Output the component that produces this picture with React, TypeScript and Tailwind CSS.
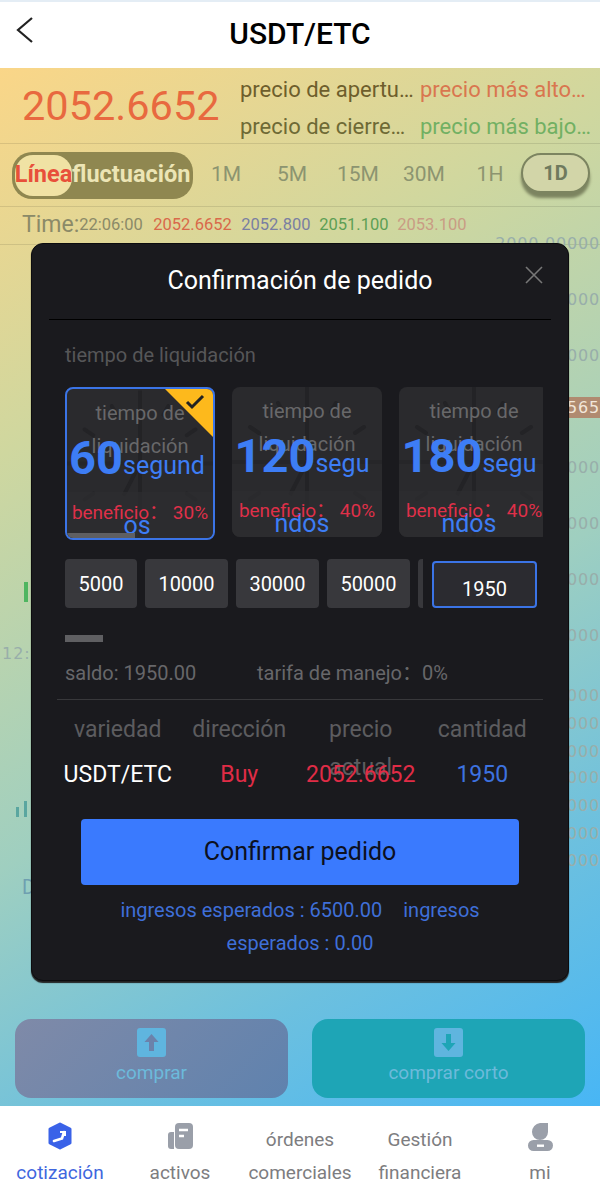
import React from "react";

const font = { fontFamily: "Roboto, 'Noto Sans CJK SC', sans-serif" };

const axis: number[] = [0, 56, 112, 224, 280, 336, 392, 452, 480, 508, 534, 562, 590, 617];

function Clock() {
  return (
    <svg className="absolute inset-0 w-full h-full" viewBox="0 0 150 150" fill="none" stroke="#232326" strokeWidth="4">
      <path d="M75 0V150" />
      <path d="M0 75H150" strokeWidth="4" stroke="#262629" />
      <path d="M18 40l9 6M132 40l-9 6M46 16l5 9M104 16l-5 9M18 112l9-6M132 112l-9-6" strokeLinecap="round" />
      <path d="M75 75L58 108" />
    </svg>
  );
}

function Card({ n, pct, active }: { n: string; pct: string; active?: boolean }) {
  return (
    <div
      className={
        "relative shrink-0 w-[150px] overflow-hidden rounded-lg bg-[#2a2a2d] " +
        (active ? "h-[153px] border-2 border-[#3b74e6]" : "h-[150px]")
      }
    >
      <Clock />
      <div className="absolute left-0 right-0 bottom-0 h-[46px] bg-[#2e2e31] opacity-70" />
      <div className="absolute top-[8px] left-0 right-0 text-center text-[20px] leading-[33px] text-[#68686a]">
        tiempo de
        <br />
        liquidación
      </div>
      <div className="absolute top-[39px] left-0 w-[140px] text-center break-all text-[#3d7df5] text-[25px] leading-[60px]">
        <span className="text-[47px] font-bold">{n}</span>segundos
      </div>
      <div className="absolute top-[109px] left-0 right-0 text-center whitespace-nowrap text-[19px] leading-[30px] text-[#df3049]">
        beneficio：{pct}
      </div>
      {active && (
        <>
          <div className="absolute top-0 right-0 w-[48px] h-[48px] bg-[#fdb91c] [clip-path:polygon(0_0,100%_0,100%_100%)]" />
          <svg className="absolute top-[5px] right-[8px]" width="20" height="16" viewBox="0 0 20 16" fill="none" stroke="#222" strokeWidth="3">
            <path d="M2 8l5 5L18 2" />
          </svg>
          <div className="absolute -left-[2px] -bottom-[2px] w-[70px] h-[7px] bg-[#5f5f62]" />
        </>
      )}
    </div>
  );
}

function Amount({ v, w }: { v: string; w: string }) {
  return (
    <div className={"flex items-center justify-center h-[49px] rounded bg-[#38383c] text-white text-[20px] shrink-0 " + w}>{v}</div>
  );
}

function NavLabel({ children, active }: { children: React.ReactNode; active?: boolean }) {
  return <div className={"text-[19px] leading-[33px] text-center whitespace-nowrap " + (active ? "text-[#3f67de]" : "text-[#7d7d80]")}>{children}</div>;
}

export default function App() {
  return (
    <div className="relative w-[600px] h-[1188px] overflow-hidden flex flex-col bg-white" style={font}>
      <div className="h-[2px] bg-[#e4edf5]" />
      <header className="relative h-[66px] flex items-center justify-center shrink-0">
        <svg className="absolute left-[15px] top-[14px]" width="20" height="28" viewBox="0 0 20 28" fill="none" stroke="#222" strokeWidth="2.2">
          <path d="M17 2L3 14l14 12" />
        </svg>
        <h1 className="text-[30px] font-medium text-black -mt-[3px]">USDT/ETC</h1>
      </header>

      <main className="relative flex-1 flex flex-col bg-[linear-gradient(150deg,#fad688_0%,#cfd79f_28%,#9fcfc0_58%,#6cc0df_80%,#48b6f5_100%)]">
        <section className="h-[76px] flex items-center border-b border-black/10 pl-[22px] shrink-0">
          <div className="text-[41.5px] text-[#e8693f] w-[218px] leading-none">2052.6652</div>
          <div className="grid grid-cols-[180px_172px] text-[22px] leading-[37px] pt-[5px]">
            <div className="truncate text-[#6e5e2c] w-[178px]">precio de apertura: 2052.6652</div>
            <div className="truncate text-[#d9764f] w-[170px]">precio más alto: 2053.100</div>
            <div className="truncate text-[#6e6a35] w-[170px]">precio de cierre: 2052.800</div>
            <div className="truncate text-[#72b063] w-[172px]">precio más bajo: 2051.100</div>
          </div>
        </section>

        <section className="h-[63px] flex items-center border-b border-black/10 shrink-0 pl-[12px]">
          <div className="w-[181px] h-[47px] rounded-[20px] bg-[#8f8750] flex items-center pl-[3px] text-[23.5px] font-bold shrink-0 whitespace-nowrap">
            <div className="w-[57px] h-[41px] rounded-[18px] bg-[#f0e2a4] flex items-center justify-center text-[#e8503a]">Línea</div>
            <span className="text-[#ece5b5]">fluctuación</span>
          </div>
          <div className="flex text-[21px] text-[#8c9470]">
            <div className="w-[66px] text-center">1M</div>
            <div className="w-[66px] text-center">5M</div>
            <div className="w-[66px] text-center">15M</div>
            <div className="w-[66px] text-center">30M</div>
            <div className="w-[66px] text-center">1H</div>
          </div>
          <div className="ml-[-2px] -mt-[4px] w-[69px] h-[40px] rounded-[20px] bg-[#d2d5a8] border-2 border-[#7c8460] shadow-[0_5px_3px_#7c8460] flex items-center justify-center text-[20px] font-bold text-[#6f7a5e]">
            1D
          </div>
        </section>

        <section className="h-[38px] flex items-center border-b border-black/10 shrink-0 pl-[22px] text-[16.5px] whitespace-nowrap">
          <span className="text-[23px] text-[#8b8a68]">Time:</span>
          <span className="text-[#8b8a68] w-[74px]">22:06:00</span>
          <span className="text-[#d9694a] w-[88px]">2052.6652</span>
          <span className="text-[#7a7fa2] w-[78px]">2052.800</span>
          <span className="text-[#5d9f55] w-[78px]">2051.100</span>
          <span className="text-[#c99c84]">2053.100</span>
        </section>

        <section className="relative flex-1 text-[#98aeaa]">
          {axis.map((y) => (
            <div key={y} className="absolute right-0 leading-none tracking-[0.8px] [font-family:'DejaVu_Sans',sans-serif] text-[16px]" style={{ top: y - 9 }}>
              2000.00000
            </div>
          ))}
          <div className="absolute right-0 top-[152px] h-[21px] w-[110px] bg-[#b08a70] text-right text-[#f2e6da] text-[16px] leading-[21px] tracking-[0.8px] [font-family:'DejaVu_Sans',sans-serif]">2052.66565</div>
          <div className="absolute left-[2px] top-[397px] text-[16px] tracking-[1px] [font-family:'DejaVu_Sans',sans-serif]">12:00</div>
          <div className="absolute left-[24px] top-[337px] w-[4px] h-[20px] bg-[#4fb560]" />
          <div className="absolute left-[16px] top-[562px] w-[3px] h-[10px] bg-[#5aa6a0]" />
          <div className="absolute left-[24px] top-[556px] w-[3px] h-[16px] bg-[#5aa6a0]" />
          <div className="absolute left-[22px] top-[627px] text-[20px] text-[#6f9fb0]">D</div>
        </section>

        <section className="h-[79px] mb-[8px] flex gap-[24px] px-[15px] shrink-0 text-[19px] text-[#6cbadb]">
          <div className="flex-1 rounded-2xl bg-[linear-gradient(135deg,#7f8aa8,#5f82ae)] flex flex-col items-center pt-[9px]">
            <svg width="29" height="29" viewBox="0 0 29 29">
              <rect width="29" height="29" rx="3" fill="#5fb5df" />
              <path d="M14.5 6l7 8h-4.5v9h-5v-9H7.5z" fill="#6b82ab" />
            </svg>
            <div className="mt-[3px] leading-[26px]">comprar</div>
          </div>
          <div className="flex-1 rounded-2xl bg-[#1ea5b6] flex flex-col items-center pt-[9px]">
            <svg width="29" height="29" viewBox="0 0 29 29">
              <rect width="29" height="29" rx="3" fill="#5fb5df" />
              <path d="M14.5 23l7-8h-4.5V6h-5v9H7.5z" fill="#1ea5b6" />
            </svg>
            <div className="mt-[3px] leading-[26px]">comprar corto</div>
          </div>
        </section>
      </main>

      <nav className="h-[82px] shrink-0 grid grid-cols-5 bg-white pt-[16px]">
        <div className="flex flex-col items-center">
          <svg width="28" height="28" viewBox="0 0 28 28">
            <path d="M14 2l10 5v14l-10 5-10-5V7z" fill="#3a62e8" stroke="#3a62e8" strokeWidth="3" strokeLinejoin="round" />
            <path d="M8 19l8-2.5 2-6.5" fill="none" stroke="#fff" strokeWidth="2.6" strokeLinecap="round" />
            <path d="M14 10h5v4" fill="none" stroke="#fff" strokeWidth="2" />
          </svg>
          <div className="mt-[6px]"><NavLabel active>cotización</NavLabel></div>
        </div>
        <div className="flex flex-col items-center">
          <svg width="28" height="28" viewBox="0 0 28 28">
            <path d="M5 10h3v17H5a3 3 0 0 1-3-3V13a3 3 0 0 1 3-3z" fill="#9a9fa9" />
            <rect x="9" y="1" width="18" height="26" rx="4" fill="#9a9fa9" />
            <path d="M13 8h9M13 14h5" stroke="#fff" strokeWidth="2.4" />
          </svg>
          <div className="mt-[6px]"><NavLabel>activos</NavLabel></div>
        </div>
        <div className="mt-[1px]">
          <NavLabel>órdenes<br />comerciales</NavLabel>
        </div>
        <div className="mt-[1px]">
          <NavLabel>Gestión<br />financiera</NavLabel>
        </div>
        <div className="flex flex-col items-center">
          <svg width="28" height="29" viewBox="0 0 28 29">
            <path d="M14 1h8v9a8 8 0 1 1-16 0 9 9 0 0 1 8-9z" fill="#9a9fa9" />
            <rect x="2" y="18" width="25" height="11" rx="5.5" fill="#9a9fa9" />
            <rect x="11" y="22.5" width="7" height="2.4" fill="#fff" />
          </svg>
          <div className="mt-[5px]"><NavLabel>mi</NavLabel></div>
        </div>
      </nav>

      {/* order confirmation dialog */}
      <div className="absolute left-[31px] top-[243px] w-[538px] h-[738px] rounded-xl bg-[#1a1a1e] border border-[#0c0c0e] shadow-[0_2px_1px_#222] flex flex-col">
        <div className="relative h-[76px] mx-[17px] border-b border-black flex items-center justify-center text-[25px] text-white shrink-0">
          <span className="-mt-[2px]">Confirmación de pedido</span>
          <svg className="absolute right-[7px] top-[21px]" width="20" height="20" viewBox="0 0 20 20" stroke="#777" strokeWidth="1.6">
            <path d="M2 2l16 16M18 2L2 18" />
          </svg>
        </div>

        <div className="pl-[33px] pt-[23px] text-[20px] leading-[24px] text-[#565658] shrink-0">tiempo de liquidación</div>

        <div className="flex gap-[17px] ml-[33px] mr-[25px] mt-[20px] h-[153px] overflow-hidden shrink-0">
          <Card n="60" pct=" 30%" active />
          <Card n="120" pct=" 40%" />
          <Card n="180" pct=" 40%" />
        </div>

        <div className="flex items-start ml-[33px] mt-[19px] h-[49px] shrink-0">
          <div className="flex gap-[8px] w-[358px] overflow-hidden">
            <Amount v="5000" w="w-[72px]" />
            <Amount v="10000" w="w-[83px]" />
            <Amount v="30000" w="w-[83px]" />
            <Amount v="50000" w="w-[83px]" />
            <Amount v="" w="w-[83px]" />
          </div>
          <div className="ml-[9px] mt-[2px] w-[105px] h-[47px] rounded border-2 border-[#3b74e6] bg-[#2b2b30] text-white text-[20px] flex items-center justify-center pt-[8px]">1950</div>
        </div>

        <div className="ml-[33px] mt-[27px] w-[38px] h-[7px] bg-[#5f5f62] shrink-0" />

        <div className="flex pl-[33px] mt-[19px] h-[24px] text-[20px] leading-[24px] text-[#67676a] shrink-0">
          <span className="w-[192px]">saldo: 1950.00</span>
          <span>tarifa de manejo：0%</span>
        </div>

        <div className="mx-[25px] mt-[14px] border-t border-[#38383b] shrink-0" />

        <div className="mx-[25px] grid grid-cols-4 text-center text-[23px] shrink-0 h-[72px]">
          {["variedad", "dirección", "precio actual", "cantidad"].map((t) => (
            <div key={t} className="text-[#5c5c5f] leading-[38px] pt-[11px]">{t}</div>
          ))}
        </div>
        <div className="mx-[25px] -mt-[12px] grid grid-cols-4 text-center text-[23px] leading-[30px] h-[30px] shrink-0">
          <div className="text-white">USDT/ETC</div>
          <div className="text-[#e02c46]">Buy</div>
          <div className="text-[#e02c46]">2052.6652</div>
          <div className="text-[#3d72e0]">1950</div>
        </div>

        <button className="mx-[49px] mt-[29px] h-[66px] rounded bg-[#3a7afe] text-[25px] text-[#0c1020] shrink-0">Confirmar pedido</button>

        <div className="mx-[49px] mt-[9px] text-center text-[20px] leading-[33px] text-[#3f6fd8]">
          <span className="mr-[16px]">ingresos esperados : 6500.00</span> <span>ingresos esperados : 0.00</span>
        </div>
      </div>
    </div>
  );
}
